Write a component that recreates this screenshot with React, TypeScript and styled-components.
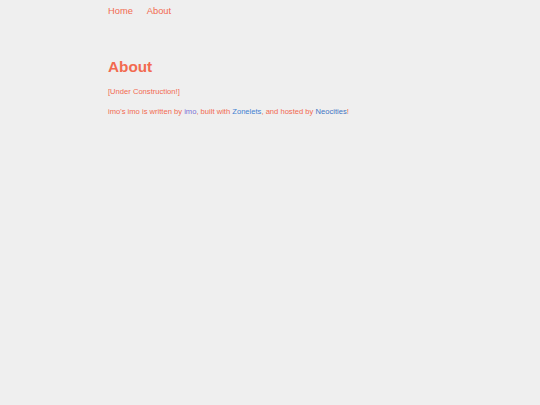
import styled, { createGlobalStyle } from 'styled-components'

const GlobalStyle = createGlobalStyle`
  body {
    margin: 0;
    background: #efefef;
    font-family: "Liberation Sans", Arial, sans-serif;
    color: #f26a50;
  }
`

const Page = styled.div`
  width: 324px;
  margin: 0 auto;
`

const Nav = styled.nav`
  display: flex;
  gap: 14px;
  padding-top: 6px;
  font-size: 9.3px;
`

const NavLink = styled.a`
  color: #f26a50;
  text-decoration: none;
`

const Title = styled.h1`
  margin: 42px 0 0;
  font-size: 15.3px;
  font-weight: bold;
  color: #f26a50;
`

const Text = styled.p`
  margin: 11px 0 0;
  font-size: 7.6px;
`

const Link = styled.a<{ $tone: string }>`
  color: ${({ $tone }) => $tone};
  text-decoration: none;
`

export default function App() {
  return (
    <>
      <GlobalStyle />
      <Page>
        <Nav>
          <NavLink href="#">Home</NavLink>
          <NavLink href="#">About</NavLink>
        </Nav>
        <Title>About</Title>
        <Text>[Under Construction!]</Text>
        <Text>
          imo's imo is written by <Link href="#" $tone="#7b6fd6">imo</Link>, built with{' '}
          <Link href="#" $tone="#3f7fd2">Zonelets</Link>, and hosted by{' '}
          <Link href="#" $tone="#3f74c4">Neocities</Link>!
        </Text>
      </Page>
    </>
  )
}
